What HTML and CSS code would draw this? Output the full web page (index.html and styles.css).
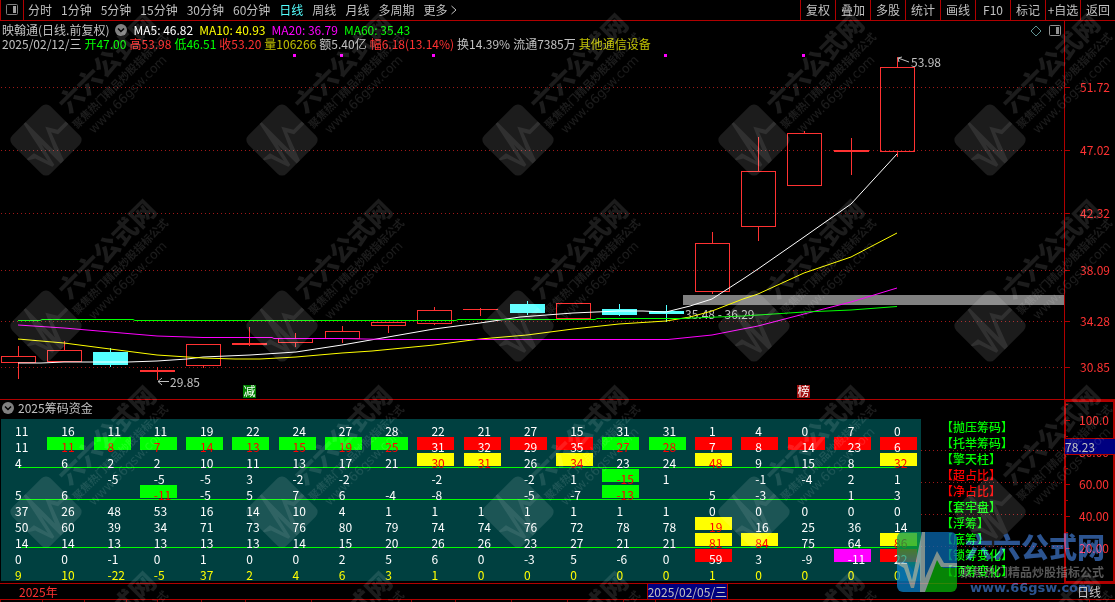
FILE: index.html
```html
<!DOCTYPE html>
<html lang="zh-CN">
<head>
<meta charset="utf-8">
<title>映翰通 日线</title>
<link rel="stylesheet" href="styles.css">
</head>
<body>
<nav class="toolbar">
  <button class="layout-toggle" aria-label="侧栏"><svg width="12" height="12" viewBox="0 0 12 12"><rect x=".5" y=".5" width="11" height="10" rx="1" fill="none" stroke="#808080"/><rect x="7" y="2" width="3" height="7" fill="#a0a0a0"/></svg></button>
  <div class="periods">
    <button>分时</button><button>1分钟</button><button>5分钟</button><button>15分钟</button><button>30分钟</button><button>60分钟</button><button class="active">日线</button><button>周线</button><button>月线</button><button>多周期</button><button class="more">更多<svg width="8" height="10" viewBox="0 0 8 10"><path d="M1.500 1L6 5L1.500 9" fill="none" stroke="#c0c0c0"/></svg></button>
  </div>
  <div class="actions">
    <button>复权</button><button>叠加</button><button>多股</button><button>统计</button><button>画线</button><button>F10</button><button>标记</button><button>+自选</button><button>返回</button>
  </div>
</nav>

<main class="workspace">
  <header class="quote">
    <div class="quote-info">
      <div class="quote-line averages">
        <span>映翰通(日线.前复权)</span>
        <button class="fold" aria-label="展开"><svg width="12" height="12" viewBox="0 0 12 12"><circle cx="6" cy="6" r="6" fill="#808080"/><path d="M3 4.500L6 7.500L9 4.500" fill="none" stroke="#000" stroke-width="1.500"/></svg></button>
        <span class="white">MA5: 46.82</span><span class="yellow">MA10: 40.93</span><span class="magenta">MA20: 36.79</span><span class="lime">MA60: 35.43</span>
      </div>
      <div class="quote-line">
        <span>2025/02/12/三</span><span class="lime">开47.00</span><span class="red">高53.98</span><span class="lime">低46.51</span><span class="red">收53.20</span><span class="olive">量106266</span><span>额5.40亿</span><span class="red">幅6.18(13.14%)</span><span>换14.39%</span><span>流通7385万</span><span class="olive">其他通信设备</span>
      </div>
    </div>
    <div class="quote-tools">
      <button aria-label="标记点"><svg width="12" height="12" viewBox="0 0 12 12"><path d="M6 1L11 6L6 11L1 6Z" fill="none" stroke="#5f9090"/></svg></button>
      <button aria-label="面板"><svg width="12" height="12" viewBox="0 0 12 12"><rect x=".5" y=".5" width="11" height="10" rx="1" fill="none" stroke="#909090"/><rect x="7" y="2" width="3" height="7" fill="#909090"/></svg></button>
    </div>
    <div class="axis-cap"></div>
  </header>

  <svg class="chart" viewBox="0 52 1115 348" role="img" aria-label="K线图">
    <g class="grid-lines">
      <path d="M1 87.500H1064M1 150.500H1064M1 213.500H1064M1 270.500H1064M1 321.500H1064M1 367.500H1064"/>
    </g>
    <g class="axis-lines"><path d="M1064.500 52V400M1064 87.500H1070M1064 150.500H1070M1064 213.500H1070M1064 270.500H1070M1064 321.500H1070M1064 367.500H1070M0 399.500H1115"/></g>
    <g class="axis-text">
      <text x="1080" y="92">51.72</text><text x="1080" y="155">47.02</text><text x="1080" y="218">42.32</text><text x="1080" y="275">38.09</text><text x="1080" y="326">34.28</text><text x="1080" y="372">30.85</text>
    </g>
    <g fill="#f0f"><path d="M293 54h3v3h-3zM340 54h3v3h-3zM432 54h3v3h-3zM664 54h3v3h-3zM802 54h3v3h-3z"/></g>
    <rect x="683" y="295" width="381" height="10" fill="#808080"/>
    <g id="candles"></g>
    <g class="note-text"><text x="685" y="319">35.48 - 36.29</text><text x="911" y="67">53.98</text><text x="170" y="387">29.85</text></g>
    <g class="averages-lines">
      <polyline stroke="#fff" points="18,363 41,363 64,362 128,362 157,361 187,359 203,357 250,355 296,352 342,345 388,337 434,329 480,323 520,317 573,313 619,311 643,311 666,312 690,306 712,299 743,279 758,269 804,237 851,204 897,154"/>
      <polyline stroke="#ff0" points="18,339 64,343 110,349 157,355 203,358 235,359 260,359 296,357 342,353 372,351 434,345 480,339 527,335 573,329 619,324 666,321 690,317 712,311 743,299 758,294 804,273 851,257 897,233"/>
      <polyline stroke="#f0f" points="18,325 64,328 110,332 157,336 203,337.500 272,337.500 274,338.500 342,338.500 388,339.500 668,339.500 712,335 758,326 804,314 851,302 897,288"/>
      <polyline stroke="#0f0" points="18,320.500 40,320.500 42,319.500 133,319.500 135,320.500 456,320.500 458,319.500 595,319.500 597,318.500 680,318.500 743,316 804,312 851,310 897,306.500"/>
    </g>
    <path d="M169 381.500H158M162 378L158 381.500L162 385M909 62L898 58M902 57L898 58L899 62" fill="none" stroke="#c0c0c0"/>
    <g class="badges">
      <rect x="243" y="385" width="13" height="13" fill="#008000"/><text x="249.500" y="396">减</text>
      <rect x="797" y="385" width="13" height="13" fill="#a01010"/><text x="803.500" y="396">榜</text>
    </g>
  </svg>

  <section class="indicator">
    <h2 class="indicator-title">
      <button class="fold" aria-label="展开"><svg width="12" height="12" viewBox="0 0 12 12"><circle cx="6" cy="6" r="6" fill="#808080"/><path d="M3 4.500L6 7.500L9 4.500" fill="none" stroke="#000" stroke-width="1.500"/></svg></button>2025筹码资金
    </h2>
    <div class="sheet"><table><tbody id="figures"></tbody></table></div>
    <ul class="legend">
      <li>【抛压筹码】</li><li>【托举筹码】</li><li>【擎天柱】</li><li class="alert">【超占比】</li><li class="alert">【净占比】</li><li>【套牢盘】</li><li>【浮筹】</li><li>【底筹】</li><li>【锁筹变化】</li><li>【顶筹变化】</li>
    </ul>
    <div class="scale">
      <ul><li>100.0</li><li>80.00</li><li>60.00</li><li>40.00</li><li>20.00</li></ul>
      <span class="cursor-value">78.23</span>
    </div>
  </section>
</main>

<footer class="timeline">
  <span class="year">2025年</span>
  <span class="cursor-date">2025/02/05/三</span>
  <button class="cycle">日线</button>
</footer>
<svg class="tab-edges" viewBox="0 0 1115 3" preserveAspectRatio="none" aria-hidden="true"><path d="M.5 0V3M42.500 0V3M84.500 0V3M126.500 0V3M157.500 0V3M201.500 0V3M245.500 0V3M311.500 0V3M411.500 0V3M455.500 0V3M511.500 0V3M567.500 0V3M623.500 0V3M655.500 0V3M711.500 0V3M1089.500 0V3" stroke="#b00000"/></svg>

<svg class="watermark" aria-hidden="true">
  <defs>
    <pattern id="tile" width="236" height="186" patternUnits="userSpaceOnUse">
      <g transform="translate(46 140) rotate(-45) scale(.9)" fill="#1c1c1c">
        <rect x="-30" y="-30" width="60" height="60" rx="7"/>
        <path d="M-30 0L-20 1L-15 18L-5 -30H-2L-2 16L10 -11L17 1H30V5H14L10 -2L-2 30H-7L-7 0L-13 26H-16L-23 6L-30 2Z" fill="#303030"/>
        <text class="mark-name" x="38" y="-2">六六公式网</text>
        <text class="mark-slogan" x="33" y="16">聚焦热门精品炒股指标公式</text>
        <text class="mark-url-thin" x="42" y="33">www.66gsw.com</text>
      </g>
    </pattern>
  </defs>
  <rect width="100%" height="100%" fill="url(#tile)"/>
</svg>

<svg class="brand" width="212" height="64" viewBox="895 530 212 64" role="img" aria-label="六六公式网">
  <defs>
    <clipPath id="mark"><rect x="897" y="532" width="60" height="60" rx="6"/></clipPath>
    <linearGradient id="left" x1="0" y1="0" x2="0" y2="1"><stop offset="0" stop-color="#0a9a60"/><stop offset=".4" stop-color="#08a838"/><stop offset="1" stop-color="#0878b8"/></linearGradient>
  </defs>
  <g clip-path="url(#mark)" opacity=".75">
    <path d="M897 532H925V592H897Z" fill="#0a80c8"/>
    <path d="M897 532H923L914 572L907 562H897Z" fill="url(#left)"/>
    <path d="M921 532H957V592H921Z" fill="#0868b0"/>
    <path d="M925 590L937 558L943 568H957V592H925Z" fill="#08b008"/>
    <path d="M897 562L907 563L912 580L922 532H925L925 578L937 551L944 563H957V567H941L937 560L925 592H920L920 562L914 588H911L904 568L897 564Z" fill="#a8c0bc"/>
  </g>
</svg>
<svg class="brand brand-words" width="150" height="80" viewBox="957 522 150 80" aria-hidden="true">
  <text class="mark-name" x="965" y="558" fill="#2c5490">六六公式网</text>
  <text class="mark-slogan" x="960" y="577" fill="#585858">聚焦热门精品炒股指标公式</text>
  <text class="mark-url" x="970" y="592" fill="#2c5490">www.66gsw.com</text>
</svg>
<script src="script.js"></script>
</body>
</html>
```
FILE: styles.css
```css
* { box-sizing: border-box; }
body {
  margin: 0;
  min-height: 100vh;
  position: relative;
  overflow-x: hidden;
  background: #000;
  color: #c0c0c0;
  font: 12px/14px "Noto Sans CJK SC", sans-serif;
}
button {
  display: flex;
  align-items: center;
  justify-content: center;
  padding: 0;
  border: 0;
  background: none;
  color: inherit;
  font: inherit;
  white-space: nowrap;
  cursor: pointer;
}
ul { margin: 0; padding: 0; list-style: none; }
.white { color: #fff; }
.yellow { color: #ff0; }
.magenta { color: #f0f; }
.lime { color: #0f0; }
.red { color: #ff3232; }
.olive { color: #c0c000; }

.toolbar { display: flex; height: 21px; border-bottom: 1px solid #b00000; }
.layout-toggle { width: 24px; border: solid #b00000; border-width: 0 1px; }
.periods { display: flex; gap: 9px; padding-left: 4px; }
.periods .active { color: #54ffff; }
.more { gap: 3px; }
.actions { display: flex; margin-left: auto; }
.actions button { width: 35px; border-left: 1px solid #b00000; }

.quote { display: flex; height: 31px; }
.quote-info { flex: 1; padding: 2px 0 0 2px; }
.quote-line { display: flex; gap: 3px; white-space: nowrap; }
.averages { gap: 6px; }
.quote-tools { display: flex; gap: 7px; padding: 4px 3px 0 0; align-items: flex-start; }
.axis-cap { width: 51px; border-left: 1px solid #b00000; }

.chart { display: block; width: 100%; height: auto; }
.grid-lines { fill: none; stroke: #a01818; stroke-dasharray: 1 3; }
.axis-lines { fill: none; stroke: #b00000; }
.axis-text { fill: #ff3232; }
.note-text { fill: #c0c0c0; }
.averages-lines { fill: none; }
.badges { fill: #fff; text-anchor: middle; }
.rise { fill: none; stroke: #ff3232; }
.flat { fill: none; stroke: #ff3232; stroke-width: 2; }
.fall { fill: #54ffff; stroke: #54ffff; }

.indicator {
  display: grid;
  grid-template: 19px 164px / 1fr 143px 51px;
}
.indicator-title {
  grid-column: 1 / 3;
  display: flex;
  align-items: center;
  gap: 4px;
  margin: 0;
  padding: 0 0 3px 2px;
  font-size: 12px;
  font-weight: 400;
}
.sheet { padding-top: 2px; margin-left: 1px; height: 162px; background: #004040; }
table { width: 100%; border-collapse: collapse; table-layout: fixed; color: #fff; }
td { width: 5.03%; height: 16px; padding: 0; vertical-align: top; }
td:last-child { width: auto; }
.ruled { background: linear-gradient(#0f0, #0f0) 17px 14px / calc(100% - 41px) 1px no-repeat; }
.last { color: #ff0; }
.cell { display: block; width: 37px; height: 13px; padding-left: 14px; line-height: 19px; }
.cell.g { background: #0f0; color: #f00; }
.cell.y { background: #ff0; color: #f00; }
.cell.r { background: #f00; }
.cell.m { background: #f0f; }

.legend { padding-left: 20px; color: #0f0; position: relative; }
.legend li { height: 16px; line-height: 16px; font-weight: 500; }
.legend li:nth-child(even):not(:last-child) {
  margin-left: -20px;
  padding-left: 20px;
  background: repeating-linear-gradient(90deg, #a01818 0 1px, transparent 1px 4px) bottom / 100% 1px no-repeat;
}
.legend .alert { color: #f00; }

.scale {
  grid-area: 1 / 3 / 3 / 4;
  position: relative;
  padding-top: 2px;
  border: 2px solid #b00000;
  color: #ff3232;
}
.scale li { height: 32px; line-height: 32px; padding-left: 13px; }
.scale li {
  background: linear-gradient(#b00000, #b00000) 0 16px / 4px 1px no-repeat,
    linear-gradient(#b00000, #b00000) 0 0 / 2px 1px no-repeat;
}
.cursor-value {
  position: absolute;
  top: 36px;
  left: -1px;
  right: -2px;
  border: solid #b00000;
  border-width: 1px 0;
  background: #000080;
  color: #c0c0c0;
  line-height: 15px;
}

.timeline {
  position: relative;
  display: flex;
  align-items: center;
  height: 17px;
  border: solid #b00000;
  border-width: 1px 0;
}
.year { padding-left: 19px; color: #ff3232; }
.cursor-date {
  position: absolute;
  top: 0;
  left: 58%;
  border: solid #b00000;
  border-width: 0 1px;
  background: #000080;
  line-height: 15px;
}
.cycle { margin-left: auto; padding-right: 14px; }
.tab-edges { display: block; width: 100%; height: 2px; }

.watermark {
  position: absolute;
  inset: 0;
  width: 100%;
  height: 100%;
  mix-blend-mode: screen;
  pointer-events: none;
}
.brand { position: absolute; right: 8px; bottom: 8px; pointer-events: none; }
.brand-words { bottom: 0; mix-blend-mode: lighten; }
.mark-name { font-size: 28px; font-weight: 900; }
.mark-slogan { font-size: 12px; font-weight: 700; }
.mark-url { font: 700 13px "DejaVu Sans", sans-serif; }
.mark-url-thin { font: 14px "DejaVu Sans", sans-serif; }
```
FILE: script.js
```js
// Daily figures per indicator row; a trailing letter selects the cell highlight.
const rows = [
  "11 16 11 11 19 22 24 27 28 22 21 27 15 31 31 1 4 0 7 0",
  "11 11g 8g 7g 14g 13g 15g 19g 25g 31r 32r 29r 35r 27g 28g 7r 8r 14r 23r 6r",
  "4 6 2 2 10 11 13 17 21 30y 31y 26 34y 23 24 48y 9 15 8 32y",
  "_ _ -5 -5 -5 3 -2 -2 _ -2 _ -2 1 -15g 1 _ -1 -4 2 1",
  "5 6 _ -11g -5 5 7 6 -4 -8 _ -5 -7 -13g _ 5 -3 _ 1 3",
  "37 26 48 53 16 14 10 4 1 1 1 1 1 1 1 0 0 0 0 0",
  "50 60 39 34 71 73 76 80 79 74 74 76 72 78 78 19y 16 25 36 14",
  "14 14 13 13 13 13 14 15 20 26 26 23 27 21 21 81y 84y 75 64 86y",
  "0 0 -1 0 1 0 0 2 5 6 0 -3 5 -6 0 59r 3 -9 -11m 22r",
  "9 10 -22 -5 37 2 4 6 3 1 0 0 0 0 0 1 0 0 0 0"
];
const ruled = [2, 4, 7];
document.getElementById("figures").innerHTML = rows.map((row, i) => {
  const cells = row.split(" ").map(v => {
    const [, value, tone] = v.match(/^(-?\d*)_?([gyrm]?)$/);
    return `<td><span class="cell ${tone}">${value}</span></td>`;
  }).join("");
  const name = ruled.includes(i) ? "ruled" : i === 9 ? "last" : "";
  return `<tr class="${name}">${cells}</tr>`;
}).join("");

// Kind, left edge, body top, body bottom, wick top, wick bottom.
const candles = [
  ["rise", 1, 356, 362, 346, 379], ["rise", 47, 350, 361, 341, 350],
  ["fall", 93, 352, 364, 348, 367], ["flat", 140, 371, 371, 367, 380],
  ["rise", 186, 344, 365, 344, 368], ["flat", 232, 344, 344, 327, 346],
  ["rise", 278, 338, 342, 333, 347], ["rise", 325, 331, 338, 326, 343],
  ["rise", 371, 322, 325, 322, 333], ["rise", 417, 310, 323, 307, 325],
  ["rise", 463, 309, 309, 308, 316], ["fall", 510, 304, 312, 301, 315],
  ["rise", 556, 303, 318, 303, 318], ["fall", 602, 309, 314, 304, 316],
  ["fall", 649, 311, 313, 305, 322], ["rise", 695, 243, 291, 232, 294],
  ["rise", 741, 171, 226, 137, 241], ["rise", 787, 133, 185, 131, 185],
  ["flat", 834, 151, 151, 138, 175], ["rise", 880, 67, 151, 57, 157]
];
document.getElementById("candles").innerHTML = candles.map(([kind, x, top, bottom, high, low]) => {
  const mid = x + 17.5;
  const wick = `<path class="${kind === "fall" ? "fall" : "rise"}" d="M${mid} ${high}V${top}M${mid} ${bottom}V${Math.max(low, bottom)}"/>`;
  const body = kind === "flat" || top === bottom
    ? `<path class="${kind}" d="M${x} ${kind === "flat" ? top : top + 0.5}H${x + 35}"/>`
    : `<rect class="${kind}" x="${x + 0.5}" y="${top + 0.5}" width="34" height="${bottom - top}"/>`;
  return wick + body;
}).join("");
```
